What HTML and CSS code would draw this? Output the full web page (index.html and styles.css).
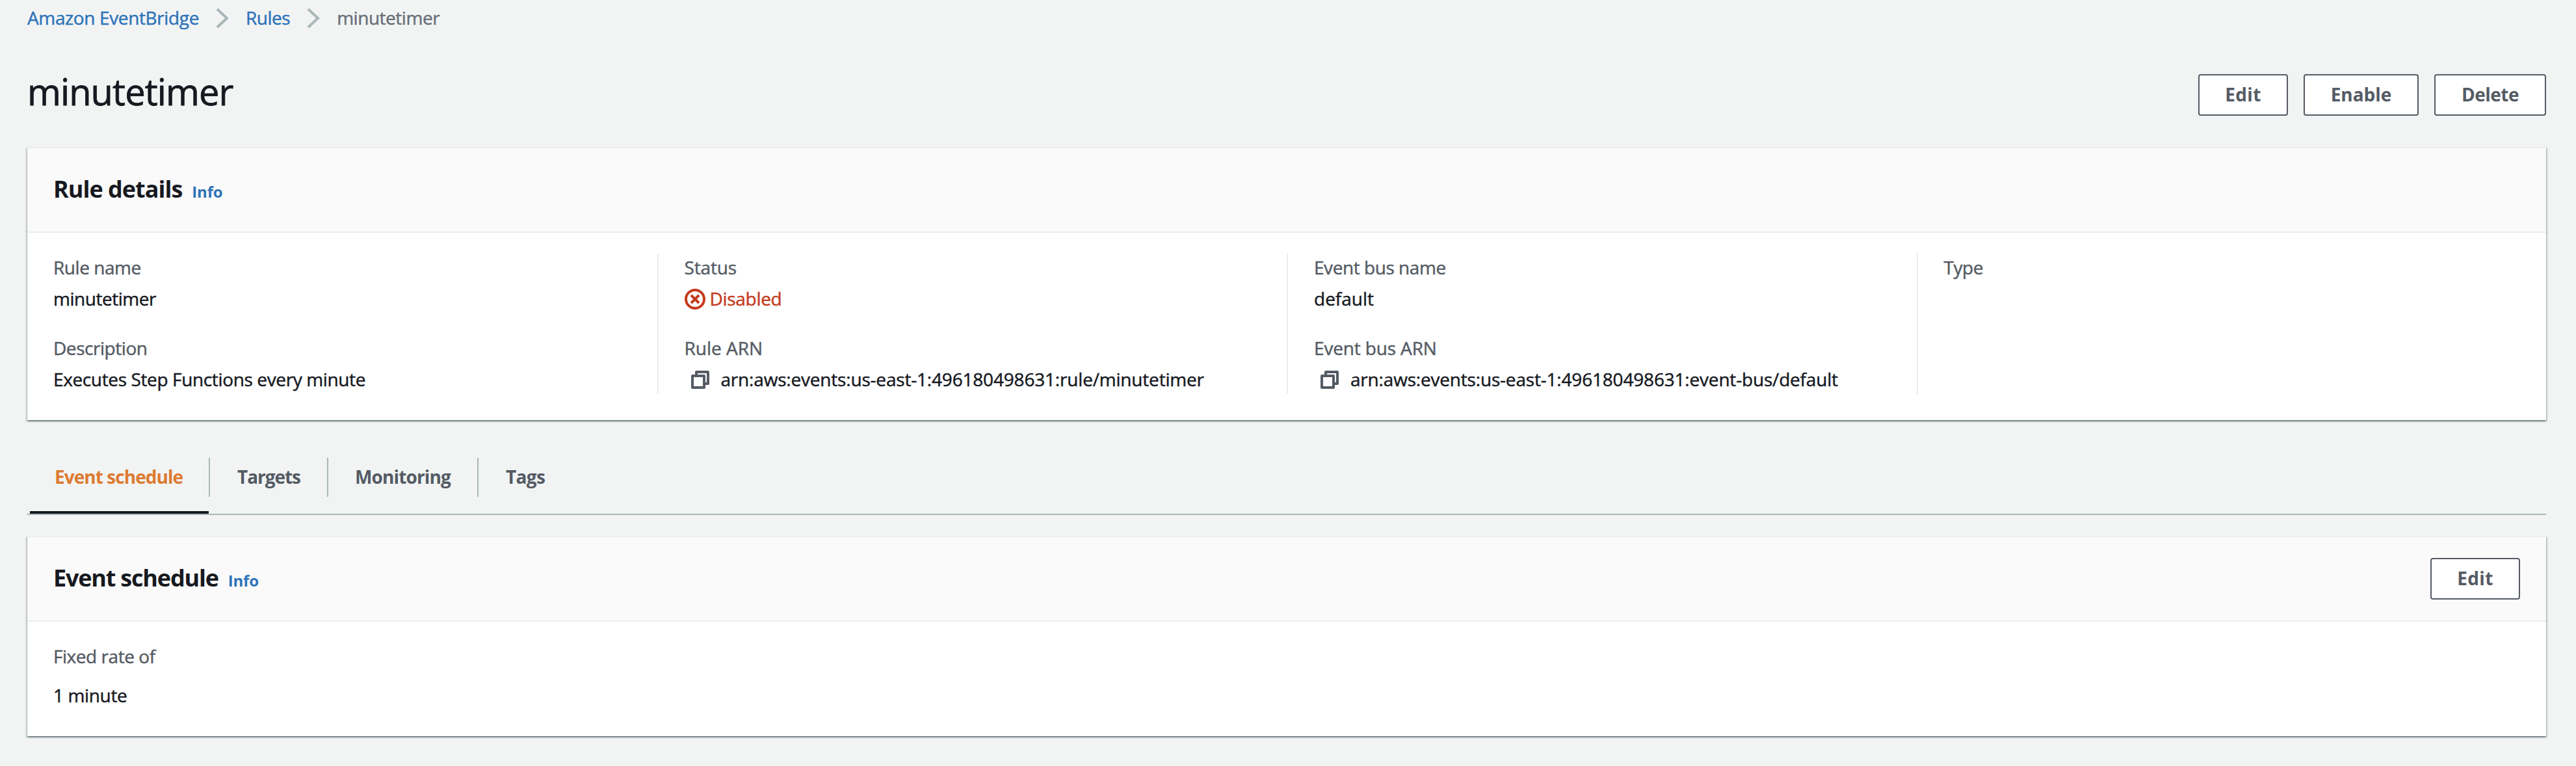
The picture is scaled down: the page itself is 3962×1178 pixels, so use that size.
FILE: index.html
```html
<!DOCTYPE html>
<html lang="en">
<head>
<meta charset="utf-8">
<title>minutetimer</title>
<link rel="stylesheet" href="styles.css">
</head>
<body>
<nav class="crumbs">
  <a class="crumb crumb-service" href="#">Amazon EventBridge</a>
  <svg class="chevron" viewBox="0 0 20 32"><path d="M2 2 L17 16 L2 30"/></svg>
  <a class="crumb crumb-rules" href="#">Rules</a>
  <svg class="chevron" viewBox="0 0 20 32"><path d="M2 2 L17 16 L2 30"/></svg>
  <span class="crumb-current">minutetimer</span>
</nav>

<header class="page-header">
  <h1>minutetimer</h1>
  <div class="actions">
    <button class="btn btn-edit">Edit</button>
    <button class="btn btn-enable">Enable</button>
    <button class="btn btn-delete">Delete</button>
  </div>
</header>

<section class="card">
  <div class="card-header">
    <h2>Rule details</h2>
    <a class="info" href="#">Info</a>
  </div>
  <div class="columns">
    <div class="column">
      <div class="field"><div class="label">Rule name</div><div class="value name">minutetimer</div></div>
      <div class="field"><div class="label">Description</div><div class="value">Executes Step Functions every minute</div></div>
    </div>
    <div class="column">
      <div class="field">
        <div class="label short">Status</div>
        <div class="value status">
          <svg class="status-icon" viewBox="0 0 16 16"><circle cx="8" cy="8" r="7"/><path d="M5 5 L11 11 M11 5 L5 11"/></svg>
          Disabled
        </div>
      </div>
      <div class="field">
        <div class="label arn-label">Rule ARN</div>
        <div class="value arn">
          <svg class="copy" viewBox="0 0 28 28"><path d="M8 8 V2 H26 V20 H20"/><path d="M2 8 H20 V26 H2 Z"/></svg>
          arn:aws:events:us-east-1:496180498631:rule/minutetimer
        </div>
      </div>
    </div>
    <div class="column">
      <div class="field"><div class="label">Event bus name</div><div class="value default">default</div></div>
      <div class="field">
        <div class="label short">Event bus ARN</div>
        <div class="value arn">
          <svg class="copy" viewBox="0 0 28 28"><path d="M8 8 V2 H26 V20 H20"/><path d="M2 8 H20 V26 H2 Z"/></svg>
          arn:aws:events:us-east-1:496180498631:event-bus/default
        </div>
      </div>
    </div>
    <div class="column">
      <div class="field"><div class="label">Type</div></div>
    </div>
  </div>
</section>

<div class="tabs">
  <div class="tab active">Event schedule</div>
  <div class="tab tab-targets">Targets</div>
  <div class="tab tab-monitoring">Monitoring</div>
  <div class="tab tab-tags">Tags</div>
</div>

<section class="card">
  <div class="card-header">
    <h2 class="schedule-title">Event schedule</h2>
    <a class="info" href="#">Info</a>
    <button class="btn btn-edit header-action">Edit</button>
  </div>
  <div class="schedule">
    <div class="label">Fixed rate of</div>
    <div class="value">1 minute</div>
  </div>
</section>
</body>
</html>
```
FILE: styles.css
```css
* { box-sizing: border-box; }

body {
  min-height: 1178px;
  margin: 0;
  padding: 6px 46px 0 42px;
  background: #f2f4f4;
  color: #16191f;
  font: 400 28px/42px "Open Sans", sans-serif;
  letter-spacing: -0.37px;
  -webkit-text-stroke: 0.45px currentColor;
}

a { color: #2e73b8; text-decoration: none; }

.crumbs { display: flex; height: 44px; }
.chevron { width: 20px; height: 32px; margin: 6px 26px 0 26px; fill: none; stroke: #aab7b8; stroke-width: 4; }
.crumb-rules { letter-spacing: -0.5px; }
.crumb-current { color: #687078; letter-spacing: -0.47px; }

.page-header { display: flex; justify-content: space-between; height: 122px; margin-top: 54px; }
h1 { margin: 0; font-size: 56px; line-height: 72px; font-weight: 400; letter-spacing: -0.9px; -webkit-text-stroke-width: 0.8px; }
.actions { display: flex; gap: 24px; padding-top: 10px; }

.btn, h2, .info, .tab { -webkit-text-stroke-width: 0; }
.btn {
  height: 64px;
  padding: 0 0 2px;
  border: 2px solid #545b64;
  border-radius: 4px;
  background: #fff;
  color: #545b64;
  font: 700 28px/58px "Open Sans", sans-serif;
}
.btn-edit { width: 138px; letter-spacing: 0.35px; }
.btn-enable { width: 177px; letter-spacing: -0.05px; }
.btn-delete { width: 172px; letter-spacing: -0.5px; }

.card {
  border-top: 2px solid #eaeded;
  background: #fff;
  box-shadow: 0 2px 2px 0 rgba(0, 28, 36, .35), 2px 2px 2px 0 rgba(0, 28, 36, .17), -2px 2px 2px 0 rgba(0, 28, 36, .17);
}
.card-header {
  display: flex;
  align-items: baseline;
  height: 130px;
  padding: 32px 40px 0 40px;
  border-bottom: 2px solid #eaeded;
  background: #fafafa;
}
h2 { margin: 0; font-size: 36px; line-height: 62px; font-weight: 700; letter-spacing: -1px; }
.schedule-title { letter-spacing: -1.2px; }
.info { margin-left: 15px; font-size: 24px; font-weight: 700; letter-spacing: -0.2px; }
.header-action { align-self: flex-start; margin-left: auto; }

.columns { display: grid; grid-template-columns: repeat(4, 1fr); padding: 32px 0 40px; }
.column { display: flex; flex-direction: column; gap: 32px; height: 216px; padding-left: 40px; border-left: 2px solid #eaeded; }
.column:first-child { border-left: 0; }
.field { height: 92px; }
.label { height: 48px; color: #545b64; letter-spacing: -0.45px; }
.short { letter-spacing: -0.15px; }
.arn-label { letter-spacing: 0; }
.name { letter-spacing: -0.47px; }
.default { letter-spacing: 0; }
.status { display: flex; gap: 7px; color: #c43b1d; letter-spacing: -0.3px; }
.status-icon { width: 32px; height: 32px; margin-top: 6px; fill: none; stroke: currentColor; stroke-width: 2; }
.arn { display: flex; gap: 18px; padding-left: 10px; letter-spacing: -0.19px; }
.copy { width: 28px; height: 28px; margin-top: 8px; fill: none; stroke: #545b64; stroke-width: 4; stroke-linejoin: round; }

.tabs { display: flex; height: 146px; margin: 0 0 32px; padding: 58px 0 0 4px; border-bottom: 2px solid #aab7b8; }
.tab {
  height: 60px;
  border-right: 2px solid #aab7b8;
  color: #545b64;
  font-weight: 700;
  line-height: 58px;
}
.active { position: relative; width: 277px; padding-left: 38px; color: #dd7b32; letter-spacing: -0.95px; }
.active::after { content: ""; position: absolute; left: 0; right: 0; bottom: -26px; height: 4px; background: #16191f; }
.tab-targets { width: 182px; padding-left: 42px; letter-spacing: -1.06px; }
.tab-monitoring { width: 231px; padding-left: 41px; letter-spacing: -0.87px; }
.tab-tags { padding-left: 42px; border-right: 0; letter-spacing: -0.65px; }

.schedule { height: 176px; padding: 32px 40px 0 40px; }
.schedule .label { height: 60px; }
```
